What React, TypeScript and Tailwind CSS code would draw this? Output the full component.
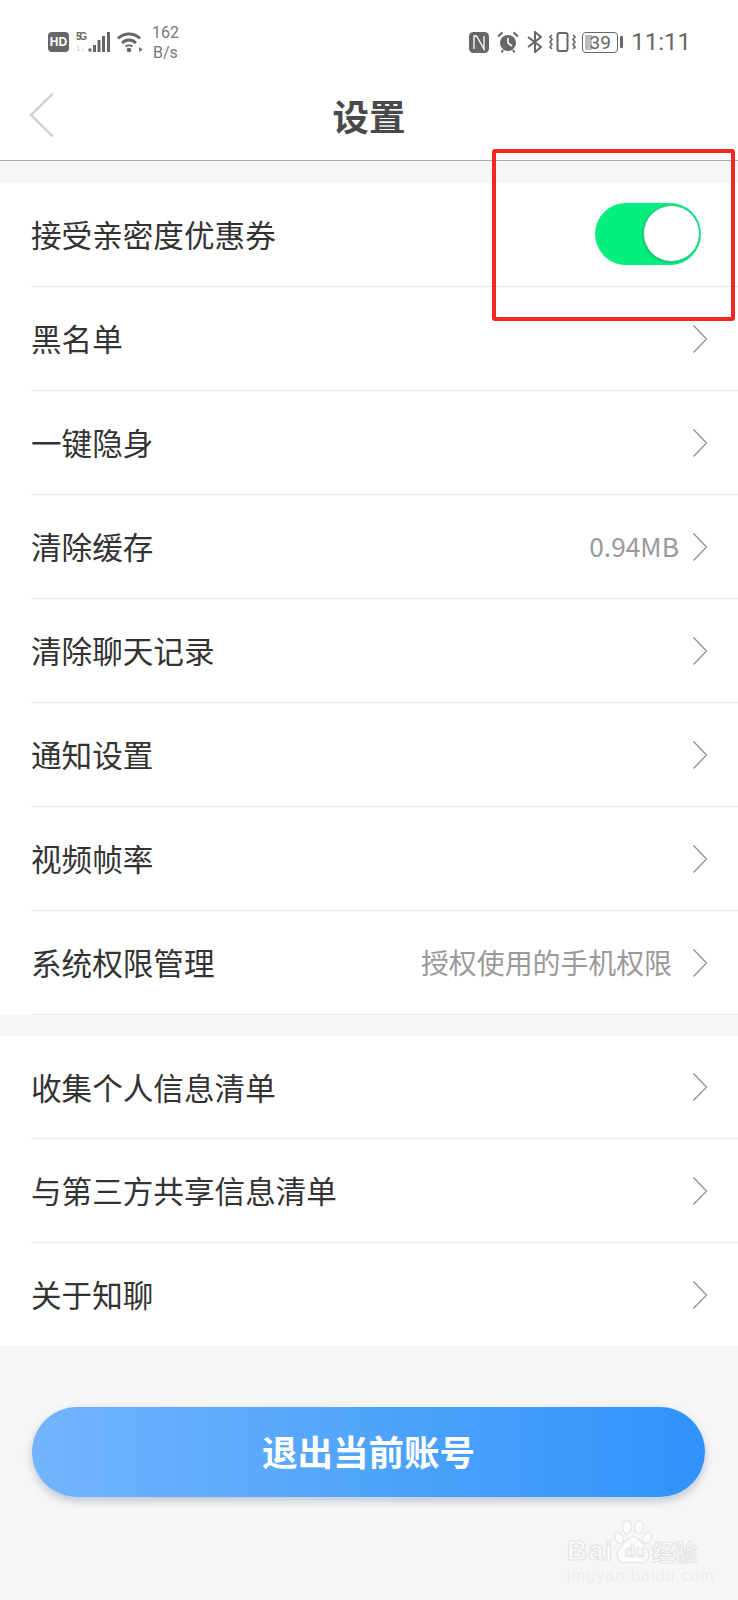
import React from "react";

const FONT = "font-['Noto_Sans_CJK_SC','Noto_Sans',sans-serif]";
const DIGITS = "font-['Roboto',sans-serif]";

interface RowItem {
  label: string;
  value?: string;
}

const firstGroup: RowItem[] = [
  { label: "黑名单" },
  { label: "一键隐身" },
  { label: "清除缓存", value: "0.94MB" },
  { label: "清除聊天记录" },
  { label: "通知设置" },
  { label: "视频帧率" },
  { label: "系统权限管理", value: "授权使用的手机权限" },
];

const secondGroup: RowItem[] = [
  { label: "收集个人信息清单" },
  { label: "与第三方共享信息清单" },
  { label: "关于知聊" },
];

const Chevron = () => (
  <svg width="16" height="30" viewBox="0 0 16 30" fill="none" className="shrink-0">
    <path d="M1.5 1.5 L14.5 15 L1.5 28.5" stroke="#929292" strokeWidth="1.3" />
  </svg>
);

const Row = ({ item, height = "h-[104px]", last }: { item: RowItem; height?: string; last?: boolean }) => (
  <div className="pl-[31px]">
    <div
      className={`flex ${height} items-center justify-between pr-[30px] ${
        last ? "" : "border-b border-[#ebebeb]"
      }`}
    >
      <span className="text-[30.6px] leading-none text-[#333333]">{item.label}</span>
      <div className="flex items-center">
        {item.value && (
          <span
            className={`leading-none text-[#9a9a9a] ${
              item.value.length > 6 ? "mr-[20px] text-[27.9px]" : "mr-[13px] text-[26.3px]"
            }`}
          >
            {item.value}
          </span>
        )}
        <Chevron />
      </div>
    </div>
  </div>
);

const StatusBar = () => (
  <div className="flex h-[84px] items-center justify-between pl-[48px] pr-[47px] text-[#666666]">
    <div className="flex items-center">
      <div className="flex h-[20px] w-[21px] items-center justify-center rounded-[4px] bg-[#666666] font-['Liberation_Sans'] text-[12px] font-bold leading-none text-white">
        HD
      </div>
      <svg width="36" height="20" viewBox="0 0 36 20" className="ml-[7px]">
        <text x="0" y="8" fontSize="10" fontWeight="700" fill="#666666" fontFamily="Liberation Sans" textLength="11">
          5G
        </text>
        <text x="0" y="19" fontSize="8" fill="#c8c8c8" fontFamily="Liberation Sans">
          1↓
        </text>
        <rect x="12.500" y="16.500" width="3" height="3" fill="#666666" />
        <rect x="17" y="13" width="3" height="7" fill="#666666" />
        <rect x="21.500" y="8" width="3" height="12" fill="#666666" />
        <rect x="26" y="4" width="3" height="16" fill="#666666" />
        <rect x="31" y="0" width="3" height="20" fill="#666666" />
      </svg>
      <svg width="26" height="21" viewBox="0 0 26 21" fill="none" className="ml-[5px]">
        <path d="M1 6.500 C7 0.500 17 0.500 23 6.500" stroke="#666666" strokeWidth="2.800" />
        <path d="M5 11 C9 7 15 7 19 11" stroke="#666666" strokeWidth="2.800" />
        <path d="M8.500 14.500 C10.500 13 13.500 13 15.500 14.500" stroke="#666666" strokeWidth="2" />
        <circle cx="12" cy="18" r="2.300" fill="#666666" />
        <path d="M22 15 L26 17.500 L22 20 Z" fill="#777777" />
      </svg>
      <div className={`ml-[9px] mt-[2px] flex flex-col text-[16px] leading-[20px] text-[#777777] ${DIGITS}`}>
        <span>162</span>
        <span className="ml-[1px]">B/s</span>
      </div>
    </div>
    <div className="flex items-center">
      <svg width="20" height="21" viewBox="0 0 20 21" fill="none">
        <rect width="20" height="21" rx="4.500" fill="#666666" />
        <path d="M5 17 V4 H7.500 L15 17 V4" stroke="#fff" strokeWidth="1.300" />
      </svg>
      <svg width="22" height="22" viewBox="0 0 22 22" fill="none" className="ml-[8px]">
        <circle cx="11" cy="12" r="8" fill="#666666" />
        <path d="M11 7 V12 L15 15" stroke="#fff" strokeWidth="1.600" />
        <path d="M1 5.500 L5.500 1.500 M21 5.500 L16.500 1.500 M6 19 L4.500 21.500 M16 19 L17.500 21.500" stroke="#666666" strokeWidth="2" />
      </svg>
      <svg width="15" height="22" viewBox="0 0 15 22" fill="none" className="ml-[8px]">
        <path d="M1 6 L14 16 L8 21 V1 L14 6 L1 16" stroke="#666666" strokeWidth="2" />
      </svg>
      <svg width="27" height="20" viewBox="0 0 27 20" fill="none" className="ml-[7px]">
        <rect x="8.500" y="1" width="10" height="18" rx="2" stroke="#666666" strokeWidth="2" />
        <path
          d="M3 3 L1 5 L3 7.500 L1 10 L3 12.500 L1 15 L3 17 M24 3 L26 5 L24 7.500 L26 10 L24 12.500 L26 15 L24 17"
          stroke="#666666"
          strokeWidth="1.600"
        />
      </svg>
      <div className="ml-[6px] flex items-center">
        <div className={`relative flex h-[21px] w-[36px] items-center justify-center rounded-[4px] border-[1.5px] border-[#666666] text-[19px] leading-none text-[#666666] ${DIGITS}`}>
          <div className="absolute inset-y-[2px] left-[2px] w-[7px] bg-[#bdbdbd]" />
          <span className="relative">39</span>
        </div>
        <div className="ml-[2px] h-[12px] w-[3px] rounded-[1px] bg-[#666666]" />
      </div>
      <span className={`ml-[8px] text-[24px] leading-none text-[#666666] ${DIGITS}`}>11:11</span>
    </div>
  </div>
);

const Watermark = () => (
  <div className="absolute left-[567px] top-[1520px] flex h-[64px] w-[132px] flex-col justify-end">
    <svg width="40" height="44" viewBox="0 0 40 44" fill="none" className="absolute left-[46px] top-0">
      <ellipse cx="6" cy="18" rx="4" ry="6" transform="rotate(-25 6 18)" stroke="#e4e4e4" fill="#fbfbfb" strokeWidth="1.200" />
      <ellipse cx="14" cy="7" rx="4.500" ry="6.500" stroke="#e4e4e4" fill="#fbfbfb" strokeWidth="1.200" />
      <ellipse cx="26" cy="7" rx="4.500" ry="6.500" stroke="#e4e4e4" fill="#fbfbfb" strokeWidth="1.200" />
      <ellipse cx="34" cy="18" rx="4" ry="6" transform="rotate(25 34 18)" stroke="#e4e4e4" fill="#fbfbfb" strokeWidth="1.200" />
      <path
        d="M20 17 C26 17 30 24 34 29 C38 35 35 43 28 43 C25 43 23 42 20 42 C17 42 15 43 12 43 C5 43 2 35 6 29 C10 24 14 17 20 17 Z"
        stroke="#e4e4e4"
        fill="#fbfbfb"
        strokeWidth="1.200"
      />
    </svg>
    <div className="relative flex h-[24px] items-center text-[#fbfbfb] [-webkit-text-stroke:1px_#e2e2e2]">
      <span className="w-[50px] font-['Liberation_Sans'] text-[28px] font-bold leading-none tracking-[1px]">Bai</span>
      <span className="ml-[1px] w-[34px] text-center font-['Liberation_Sans'] text-[17px] font-bold leading-none">du</span>
      <span className="text-[22.5px] font-bold leading-none">经验</span>
    </div>
    <span className="mt-[5px] whitespace-nowrap font-['Liberation_Sans'] text-[16px] leading-[16px] tracking-[1.1px] text-[#ececec]">
      jingyan.baidu.com
    </span>
  </div>
);

const App: React.FC = () => {
  return (
    <div className={`relative h-[1600px] w-[738px] overflow-hidden bg-[#f6f6f6] ${FONT}`}>
      <div className="bg-white">
        <StatusBar />
        <div className="relative flex h-[77px] items-center justify-center border-b border-[#ababab]">
          <svg width="26" height="46" viewBox="0 0 26 46" fill="none" className="absolute left-[29px] top-[8px]">
            <path d="M24 1.500 L2 23 L24 44.500" stroke="#cfcfcf" strokeWidth="2.400" />
          </svg>
          <h1 className="mb-[12px] text-[36.5px] font-bold leading-none text-[#4a4a4a]">设置</h1>
        </div>
      </div>

      <div className="mt-[22px] bg-white">
        <div className="pl-[31px]">
          <div className="flex h-[104px] items-center justify-between border-b border-[#ebebeb] pr-[37px]">
            <span className="text-[30.6px] leading-none text-[#333333]">接受亲密度优惠券</span>
            <div className="mb-[2px] flex h-[62px] w-[106px] items-center justify-end rounded-full bg-[#05ee80] pr-[1px]">
              <div className="h-[57px] w-[57px] rounded-full border-[1.5px] border-[#35c98a] bg-white shadow-[-1px_1px_2px_rgba(0,90,50,0.25)]" />
            </div>
          </div>
        </div>
        {firstGroup.map((item) => (
          <Row key={item.label} item={item} />
        ))}
      </div>

      <div className="mt-[21px] bg-white">
        <Row item={secondGroup[0]} height="h-[103px]" />
        <Row item={secondGroup[1]} />
        <Row item={secondGroup[2]} height="h-[103px]" last />
      </div>

      <div className="px-[32px] pt-[61px]">
        <button className="flex h-[90px] w-[673px] items-center justify-center rounded-full bg-gradient-to-r from-[#72b5fd] via-[#4fa4fb] to-[#2f93fb] pb-[2px] text-[35.5px] font-bold leading-none text-white shadow-[0_4px_8px_rgba(60,90,130,0.3)]">
          退出当前账号
        </button>
      </div>

      <Watermark />

      {/* red annotation box */}
      <div className="absolute left-[492px] top-[149px] h-[172px] w-[243px] rounded-[3px] border-[4px] border-[#f0281f]" />
    </div>
  );
};

export default App;
